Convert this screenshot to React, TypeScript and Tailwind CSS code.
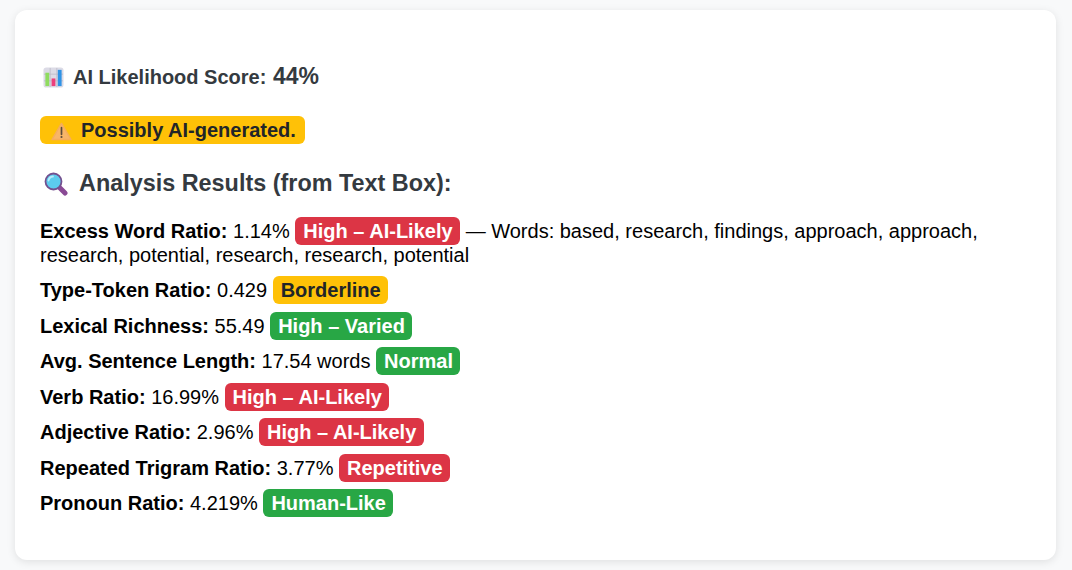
const badgeColors = {
  red: 'bg-[#dc3545] text-white',
  green: 'bg-[#28a745] text-white',
  yellow: 'bg-[#ffc107] text-[#212529]',
};

function Badge({ color, children }: { color: 'red' | 'green' | 'yellow'; children: React.ReactNode }) {
  return (
    <span className={`rounded-[6px] py-[3px] pl-2 pr-[7.5px] font-bold ${badgeColors[color]}`}>
      {children}
    </span>
  );
}

function ChartIcon() {
  return (
    <svg viewBox="0 0 22 22" className="mr-[9px] inline-block h-[21px] w-[21px] align-[-4px]">
      <rect x="0.5" y="0.5" width="21" height="21" rx="3" fill="#dcdbe6" />
      <path d="M1 7.5H21M1 14.5H21M7.5 1V21M14.5 1V21" stroke="#b9b8c6" strokeWidth="0.8" />
      <rect x="2.5" y="6" width="4" height="14" fill="#8fdc5f" />
      <rect x="9" y="12" width="4" height="8" fill="#ec3f7c" />
      <rect x="15.5" y="3" width="4" height="17" fill="#2f93e6" />
    </svg>
  );
}

function WarningIcon() {
  return (
    <svg viewBox="0 0 22 20" className="ml-[3px] mr-[9px] inline-block h-[19px] w-[21px] align-[-4px]">
      <path d="M11 1.5 21 18.5H1Z" fill="#f8b568" stroke="#f6ad5c" strokeWidth="1.5" strokeLinejoin="round" />
      <path d="M11 6V13" stroke="#5b4a3a" strokeWidth="1.8" strokeLinecap="round" />
      <circle cx="11" cy="15.8" r="1.1" fill="#5b4a3a" />
    </svg>
  );
}

function SearchIcon() {
  return (
    <svg viewBox="0 0 24 24" className="ml-[4px] mr-[11px] inline-block h-[24px] w-[24px] align-[-5px]">
      <path d="M15.5 15.5 21 21" stroke="#8a4a95" strokeWidth="5" strokeLinecap="round" />
      <circle cx="9.5" cy="9.5" r="8" fill="#5ccbee" stroke="#73508f" strokeWidth="1.8" />
      <path d="M4.5 8.5A5 5 0 0 1 9 4.5" stroke="#b6ecfa" strokeWidth="1.8" fill="none" strokeLinecap="round" />
    </svg>
  );
}

const rows = [
  { label: 'Type-Token Ratio:', value: '0.429', color: 'yellow', badge: 'Borderline' },
  { label: 'Lexical Richness:', value: '55.49', color: 'green', badge: 'High – Varied' },
  { label: 'Avg. Sentence Length:', value: '17.54 words', color: 'green', badge: 'Normal' },
  { label: 'Verb Ratio:', value: '16.99%', color: 'red', badge: 'High – AI-Likely' },
  { label: 'Adjective Ratio:', value: '2.96%', color: 'red', badge: 'High – AI-Likely' },
  { label: 'Repeated Trigram Ratio:', value: '3.77%', color: 'red', badge: 'Repetitive' },
  { label: 'Pronoun Ratio:', value: '4.219%', color: 'green', badge: 'Human-Like' },
] as const;

export default function App() {
  return (
    <div className="h-[570px] bg-[#f8f9fa] pl-[15px] pr-[16px] pt-[10px] font-['Liberation_Sans',Arial,sans-serif] text-[20px] leading-[24px] text-black">
      <div className="h-[550px] rounded-xl bg-white pl-[25px] pr-[50px] pt-[54px] shadow-[0_2px_8px_rgba(0,0,0,0.1)]">
        <h3 className="pl-[3px] text-[20px] font-bold leading-[24px] text-[#343a40]">
          <ChartIcon />AI Likelihood Score: <span className="ml-[1px] text-[23px] text-[#343a40]">44%</span>
        </h3>
        <div className="mt-[29px]">
          <Badge color="yellow"><WarningIcon />Possibly AI-generated.&#8202;</Badge>
        </div>
        <h3 className="mt-[27px] text-[23.4px] font-bold leading-[28px] text-[#343a40]"><SearchIcon />Analysis Results (from Text Box):</h3>
        <div className="mt-[21.7px] flex flex-col gap-[11.5px]">
          <p>
            <b>Excess Word Ratio:</b> 1.14% <Badge color="red">High – AI-Likely</Badge> — Words: based, research, findings, approach, approach, research, potential, research, research, potential
          </p>
          {rows.map((row) => (
            <p key={row.label}>
              <b>{row.label}</b> {row.value} <Badge color={row.color}>{row.badge}</Badge>
            </p>
          ))}
        </div>
      </div>
    </div>
  );
}
